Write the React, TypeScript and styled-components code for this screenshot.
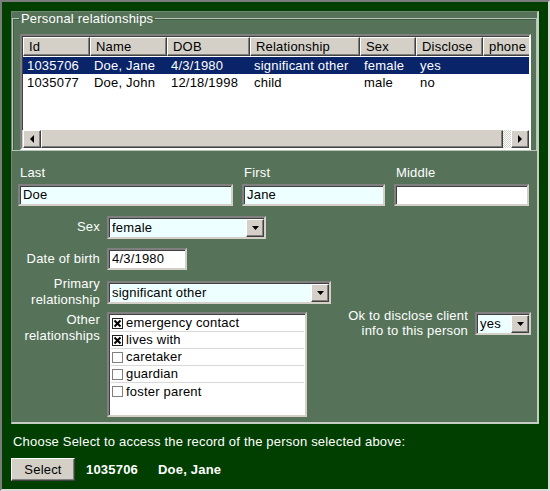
import styled, { createGlobalStyle } from "styled-components";

const GlobalStyle = createGlobalStyle`
  html, body {
    margin: 0;
    padding: 0;
    background: #ffffff;
  }
  body {
    font-family: "Liberation Sans", Arial, sans-serif;
    font-size: 13px;
  }
`;

type Person = {
  id: string;
  name: string;
  dob: string;
  relationship: string;
  sex: string;
  disclose: string;
};

const people: Person[] = [
  { id: "1035706", name: "Doe, Jane", dob: "4/3/1980", relationship: "significant other", sex: "female", disclose: "yes" },
  { id: "1035077", name: "Doe, John", dob: "12/18/1998", relationship: "child", sex: "male", disclose: "no" },
];

const columns = [
  { title: "Id", width: 67 },
  { title: "Name", width: 77 },
  { title: "DOB", width: 83 },
  { title: "Relationship", width: 110 },
  { title: "Sex", width: 56 },
  { title: "Disclose", width: 67 },
  { title: "phone", width: 60 },
];

const others = [
  { label: "emergency contact", checked: true },
  { label: "lives with", checked: true },
  { label: "caretaker", checked: false },
  { label: "guardian", checked: false },
  { label: "foster parent", checked: false },
];

const Arrow = ({ dir }: { dir: "down" | "left" | "right" }) => {
  const points =
    dir === "down" ? "0,0 7,0 3.5,4" : dir === "left" ? "4,0 4,8 0,4" : "0,0 0,8 4,4";
  const w = dir === "down" ? 7 : 4;
  const h = dir === "down" ? 4 : 8;
  return (
    <svg width={w} height={h} viewBox={`0 0 ${w} ${h}`}>
      <polygon points={points} fill="#000" />
    </svg>
  );
};

const CheckMark = ({ checked }: { checked: boolean }) => (
  <svg width="11" height="11" viewBox="0 0 11 11">
    <rect x="0.5" y="0.5" width="10" height="10" fill="#fff" stroke={checked ? "#202020" : "#808080"} />
    {checked && (
      <path d="M2.5 2.5 L8.5 8.5 M8.5 2.5 L2.5 8.5" stroke="#000" strokeWidth="2" />
    )}
  </svg>
);

const Combo = ({ value, width }: { value: string; width: number }) => (
  <ComboBox $width={width}>
    <ComboValue>{value}</ComboValue>
    <DropButton>
      <Arrow dir="down" />
    </DropButton>
  </ComboBox>
);

const App = () => {
  const selected = people[0];
  return (
    <>
      <GlobalStyle />
      <Frame>
        <Panel>
          <Group>
            <Legend>Personal relationships</Legend>
            <ListView>
              <HeaderRow>
                {columns.map((c) => (
                  <HeaderCell key={c.title} $width={c.width}>
                    {c.title}
                  </HeaderCell>
                ))}
              </HeaderRow>
              <ListBody>
                {people.map((p, i) => (
                  <ListRow key={p.id} $selected={i === 0}>
                    <Cell $width={67}>{p.id}</Cell>
                    <Cell $width={77}>{p.name}</Cell>
                    <Cell $width={83}>{p.dob}</Cell>
                    <Cell $width={110}>{p.relationship}</Cell>
                    <Cell $width={56}>{p.sex}</Cell>
                    <Cell $width={67}>{p.disclose}</Cell>
                  </ListRow>
                ))}
              </ListBody>
              <ScrollBar>
                <ScrollButton>
                  <Arrow dir="left" />
                </ScrollButton>
                <ScrollTrack>
                  <Thumb />
                </ScrollTrack>
                <ScrollButton>
                  <Arrow dir="right" />
                </ScrollButton>
              </ScrollBar>
            </ListView>
          </Group>

          <NameRow>
            <NameField $width={215}>
              <FieldLabel>Last</FieldLabel>
              <TextBox $tint>Doe</TextBox>
            </NameField>
            <NameField $width={143}>
              <FieldLabel>First</FieldLabel>
              <TextBox $tint>Jane</TextBox>
            </NameField>
            <NameField $width={135}>
              <FieldLabel>Middle</FieldLabel>
              <TextBox />
            </NameField>
          </NameRow>

          <FormRow $gap={10}>
            <SideLabel>Sex</SideLabel>
            <Combo value="female" width={159} />
          </FormRow>
          <FormRow $gap={10}>
            <SideLabel>Date of birth</SideLabel>
            <TextBox $width={80}>4/3/1980</TextBox>
          </FormRow>
          <FormRow $gap={11}>
            <SideLabel>
              Primary
              <br />
              relationship
            </SideLabel>
            <Combo value="significant other" width={224} />
          </FormRow>

          <BottomRow>
            <OtherGroup>
              <SideLabel $top>
                Other
                <br />
                relationships
              </SideLabel>
              <CheckList>
                {others.map((o) => (
                  <CheckItem key={o.label}>
                    <CheckMark checked={o.checked} />
                    <span>{o.label}</span>
                  </CheckItem>
                ))}
              </CheckList>
            </OtherGroup>
            <DiscloseGroup>
              <DiscloseLabel>
                Ok to disclose client
                <br />
                info to this person
              </DiscloseLabel>
              <Combo value="yes" width={56} />
            </DiscloseGroup>
          </BottomRow>
        </Panel>

        <Hint>Choose Select to access the record of the person selected above:</Hint>
        <SelectBar>
          <PushButton>Select</PushButton>
          <SelectedId>{selected.id}</SelectedId>
          <SelectedName>{selected.name}</SelectedName>
        </SelectBar>
      </Frame>
    </>
  );
};

const Frame = styled.div`
  box-sizing: border-box;
  width: 550px;
  height: 491px;
  background: #003f00;
  border-style: solid;
  border-width: 2px;
  border-color: #7c7c7c #dcdcdc #dcdcdc #7c7c7c;
  padding: 9px 9px 0 9px;
  display: flex;
  flex-direction: column;
  color: #ffffff;
  font-family: "Liberation Sans", Arial, sans-serif;
  font-size: 13px;
  letter-spacing: 0.2px;
`;

const Panel = styled.div`
  box-sizing: border-box;
  width: 528px;
  height: 413px;
  background: #56735a;
  border-style: solid;
  border-width: 1px 2px 2px 1px;
  border-color: #6d886f #c4ccc4 #c4ccc4 #6d886f;
  display: flex;
  flex-direction: column;
`;

const Group = styled.fieldset`
  margin: 0;
  padding: 9px 5px 0 6px;
  border: 1px solid #b9c5b9;
  box-shadow: inset 1px 1px 0 #3f5a42;
  min-width: 0;
`;

const Legend = styled.legend`
  padding: 0 2px;
  line-height: 13px;
  color: #ffffff;
`;

const ListView = styled.div`
  box-sizing: border-box;
  height: 116px;
  width: 511px;
  margin-left: 1px;
  background: #ffffff;
  border: 2px solid;
  border-color: #808080 #ffffff #ffffff #808080;
  box-shadow: inset 1px 1px 0 #404040;
  display: flex;
  flex-direction: column;
  overflow: hidden;
  color: #000000;
`;

const HeaderRow = styled.div`
  display: flex;
  height: 19px;
  flex: none;
  overflow: hidden;
  padding-left: 1px;
  margin-top: 1px;
`;

const HeaderCell = styled.div<{ $width: number }>`
  box-sizing: border-box;
  flex: none;
  width: ${(p) => p.$width}px;
  height: 19px;
  background: #d4d0c8;
  border-style: solid;
  border-width: 1px;
  border-color: #ffffff #404040 #404040 #ffffff;
  box-shadow: inset -1px -1px 0 #808080;
  padding-left: 5px;
  line-height: 17px;
  white-space: nowrap;
`;

const ListBody = styled.div`
  flex: 1;
  padding-top: 1px;
`;

const ListRow = styled.div<{ $selected?: boolean }>`
  display: flex;
  height: 17px;
  line-height: 17px;
  margin-left: 1px;
  background: ${(p) => (p.$selected ? "#0a246a" : "transparent")};
  color: ${(p) => (p.$selected ? "#ffffff" : "#000000")};
`;

const Cell = styled.div<{ $width: number }>`
  flex: none;
  width: ${(p) => p.$width}px;
  padding-left: 4px;
  box-sizing: border-box;
  white-space: nowrap;
`;

const ScrollBar = styled.div`
  display: flex;
  height: 18px;
  flex: none;
  padding-left: 1px;
  background: #d4d0c8;
`;

const ScrollButton = styled.div`
  box-sizing: border-box;
  width: 18px;
  height: 18px;
  flex: none;
  background: #d4d0c8;
  border-style: solid;
  border-width: 1px;
  border-color: #ffffff #404040 #404040 #ffffff;
  box-shadow: inset -1px -1px 0 #808080;
  display: flex;
  align-items: center;
  justify-content: center;
`;

const ScrollTrack = styled.div`
  flex: 1;
  display: flex;
  padding-right: 8px;
  background-color: #ffffff;
  background-image: repeating-conic-gradient(#d4d0c8 0% 25%, #ffffff 0% 50%);
  background-size: 2px 2px;
`;

const Thumb = styled.div`
  box-sizing: border-box;
  flex: 1;
  background: #d4d0c8;
  border-style: solid;
  border-width: 1px;
  border-color: #d4d0c8 #404040 #404040 #ffffff;
  box-shadow: inset -1px -1px 0 #808080;
`;

const NameRow = styled.div`
  display: flex;
  gap: 9px;
  padding: 14px 0 0 6px;
`;

const NameField = styled.div<{ $width: number }>`
  width: ${(p) => p.$width}px;
  display: flex;
  flex-direction: column;
  gap: 4px;
`;

const FieldLabel = styled.div`
  padding-left: 2px;
  line-height: 15px;
`;

const TextBox = styled.div<{ $tint?: boolean; $width?: number }>`
  box-sizing: border-box;
  height: 22px;
  width: ${(p) => (p.$width ? `${p.$width}px` : "100%")};
  background: ${(p) => (p.$tint ? "#eeffff" : "#ffffff")};
  border: 2px solid;
  border-color: #808080 #d4d0c8 #d4d0c8 #808080;
  box-shadow: inset 1px 1px 0 #404040;
  color: #000000;
  padding-left: 3px;
  line-height: 18px;
  white-space: nowrap;
`;

const FormRow = styled.div<{ $gap: number }>`
  display: flex;
  align-items: center;
  gap: 7px;
  height: 22px;
  margin-top: ${(p) => p.$gap}px;
`;

const SideLabel = styled.div<{ $top?: boolean }>`
  width: 88px;
  flex: none;
  text-align: right;
  line-height: 16px;
  align-self: ${(p) => (p.$top ? "flex-start" : "center")};
`;

const ComboBox = styled.div<{ $width: number }>`
  box-sizing: border-box;
  width: ${(p) => p.$width}px;
  height: 23px;
  display: flex;
  align-items: stretch;
  background: #eeffff;
  border: 2px solid;
  border-color: #808080 #d4d0c8 #d4d0c8 #808080;
  box-shadow: inset 1px 1px 0 #404040;
  color: #000000;
  flex: none;
`;

const ComboValue = styled.div`
  flex: 1;
  padding-left: 3px;
  line-height: 19px;
  white-space: nowrap;
  overflow: hidden;
`;

const DropButton = styled.div`
  box-sizing: border-box;
  width: 18px;
  margin: 1px 0 0 0;
  flex: none;
  background: #d4d0c8;
  border-style: solid;
  border-width: 1px;
  border-color: #ffffff #404040 #404040 #ffffff;
  box-shadow: inset -1px -1px 0 #808080;
  display: flex;
  align-items: center;
  justify-content: center;
`;

const BottomRow = styled.div`
  display: flex;
  justify-content: space-between;
  margin-top: 9px;
  padding-right: 6px;
`;

const OtherGroup = styled.div`
  display: flex;
  gap: 7px;
`;

const CheckList = styled.div`
  box-sizing: border-box;
  width: 200px;
  height: 105px;
  background: #ffffff;
  border: 2px solid;
  border-color: #808080 #d4d0c8 #d4d0c8 #808080;
  box-shadow: inset 1px 1px 0 #404040;
  color: #000000;
  padding: 1px 1px 0 2px;
`;

const CheckItem = styled.div`
  box-sizing: border-box;
  display: flex;
  align-items: center;
  gap: 3px;
  height: 17px;
  padding-left: 1px;
  border-bottom: 1px solid #d8d8d8;
  line-height: 16px;
  &:last-child {
    border-bottom: none;
  }
`;

const DiscloseGroup = styled.div`
  display: flex;
  align-items: flex-start;
  gap: 7px;
`;

const DiscloseLabel = styled.div`
  text-align: right;
  line-height: 15px;
  margin-top: -4px;
`;

const Hint = styled.div`
  margin-top: 10px;
  padding-left: 2px;
  line-height: 15px;
  white-space: nowrap;
`;

const SelectBar = styled.div`
  display: flex;
  align-items: center;
  margin-top: 9px;
`;

const PushButton = styled.div`
  box-sizing: border-box;
  width: 64px;
  height: 23px;
  background: #d4d0c8;
  color: #000000;
  border-style: solid;
  border-width: 1px;
  border-color: #ffffff #404040 #404040 #ffffff;
  box-shadow: inset -1px -1px 0 #808080;
  display: flex;
  align-items: center;
  justify-content: center;
`;

const SelectedId = styled.span`
  font-weight: bold;
  margin-left: 11px;
  width: 72px;
`;

const SelectedName = styled.span`
  font-weight: bold;
`;

export default App;
